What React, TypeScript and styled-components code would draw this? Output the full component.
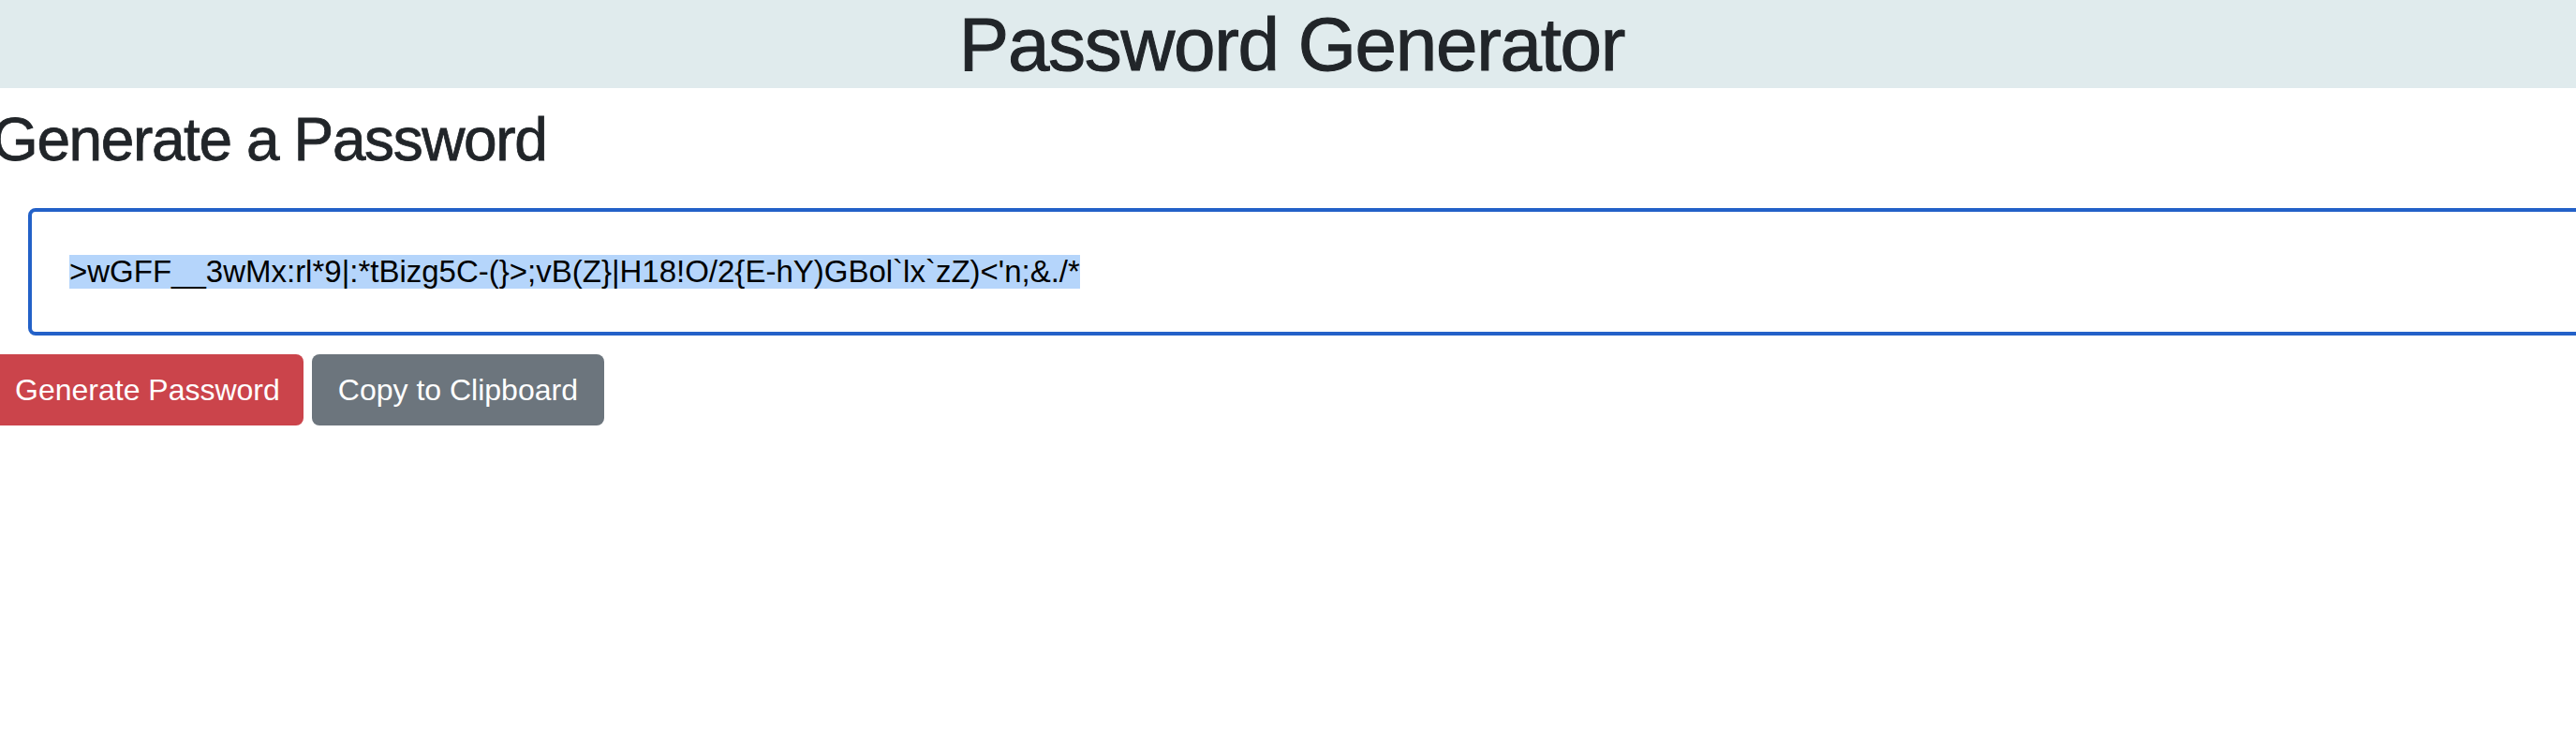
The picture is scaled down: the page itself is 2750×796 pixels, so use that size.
import styled, { createGlobalStyle } from 'styled-components';

const password = ">wGFF__3wMx:rl*9|:*tBizg5C-(}>;vB(Z}|H18!O/2{E-hY)GBol`lx`zZ)<'n;&./*";

const GlobalStyle = createGlobalStyle`
  html,
  body {
    margin: 0;
    overflow: hidden;
  }

  body {
    font-family: 'Liberation Sans', Arial, sans-serif;
    color: #212529;
    background: #fff;
  }
`;

const Header = styled.header`
  height: 94px;
  background-color: #e0ebed;
  text-align: center;
`;

const Title = styled.h1`
  margin: 0;
  padding-left: 8px;
  font-size: 80px;
  font-weight: 400;
  line-height: 96px;
  letter-spacing: -1.3px;
  -webkit-text-stroke: 1px #212529;
`;

const Main = styled.main`
  margin-left: -9px;
`;

const SectionTitle = styled.h2`
  margin: 17px 0 34px;
  font-size: 64px;
  font-weight: 400;
  line-height: 77px;
  letter-spacing: -1.4px;
  -webkit-text-stroke: 0.8px #212529;
`;

const Field = styled.div`
  box-sizing: border-box;
  display: flex;
  align-items: center;
  width: calc(100% + 60px);
  height: 136px;
  margin-left: 39px;
  padding-left: 40px;
  border: 4px solid #2361c8;
  border-radius: 8px;
`;

const Selected = styled.span`
  background-color: #b5d5fb;
  color: #000;
  font-size: 33px;
  line-height: 36px;
  white-space: pre;
`;

const ButtonRow = styled.div`
  display: flex;
  gap: 9px;
  margin-top: 20px;
`;

const Button = styled.button<{ $variant: 'danger' | 'secondary' }>`
  height: 76px;
  padding: 0 ${({ $variant }) => ($variant === 'danger' ? '25px' : '28px')};
  border: none;
  border-radius: 8px;
  background-color: ${({ $variant }) => ($variant === 'danger' ? '#cb444b' : '#6c757d')};
  color: #fff;
  font-family: inherit;
  font-size: 32px;
  line-height: 76px;
`;

const App = () => {
  return (
    <>
      <GlobalStyle />
      <Header>
        <Title>Password Generator</Title>
      </Header>
      <Main>
        <SectionTitle>Generate a Password</SectionTitle>
        <Field>
          <Selected>{password}</Selected>
        </Field>
        <ButtonRow>
          <Button $variant='danger'>Generate Password</Button>
          <Button $variant='secondary'>Copy to Clipboard</Button>
        </ButtonRow>
      </Main>
    </>
  );
};

export default App;
